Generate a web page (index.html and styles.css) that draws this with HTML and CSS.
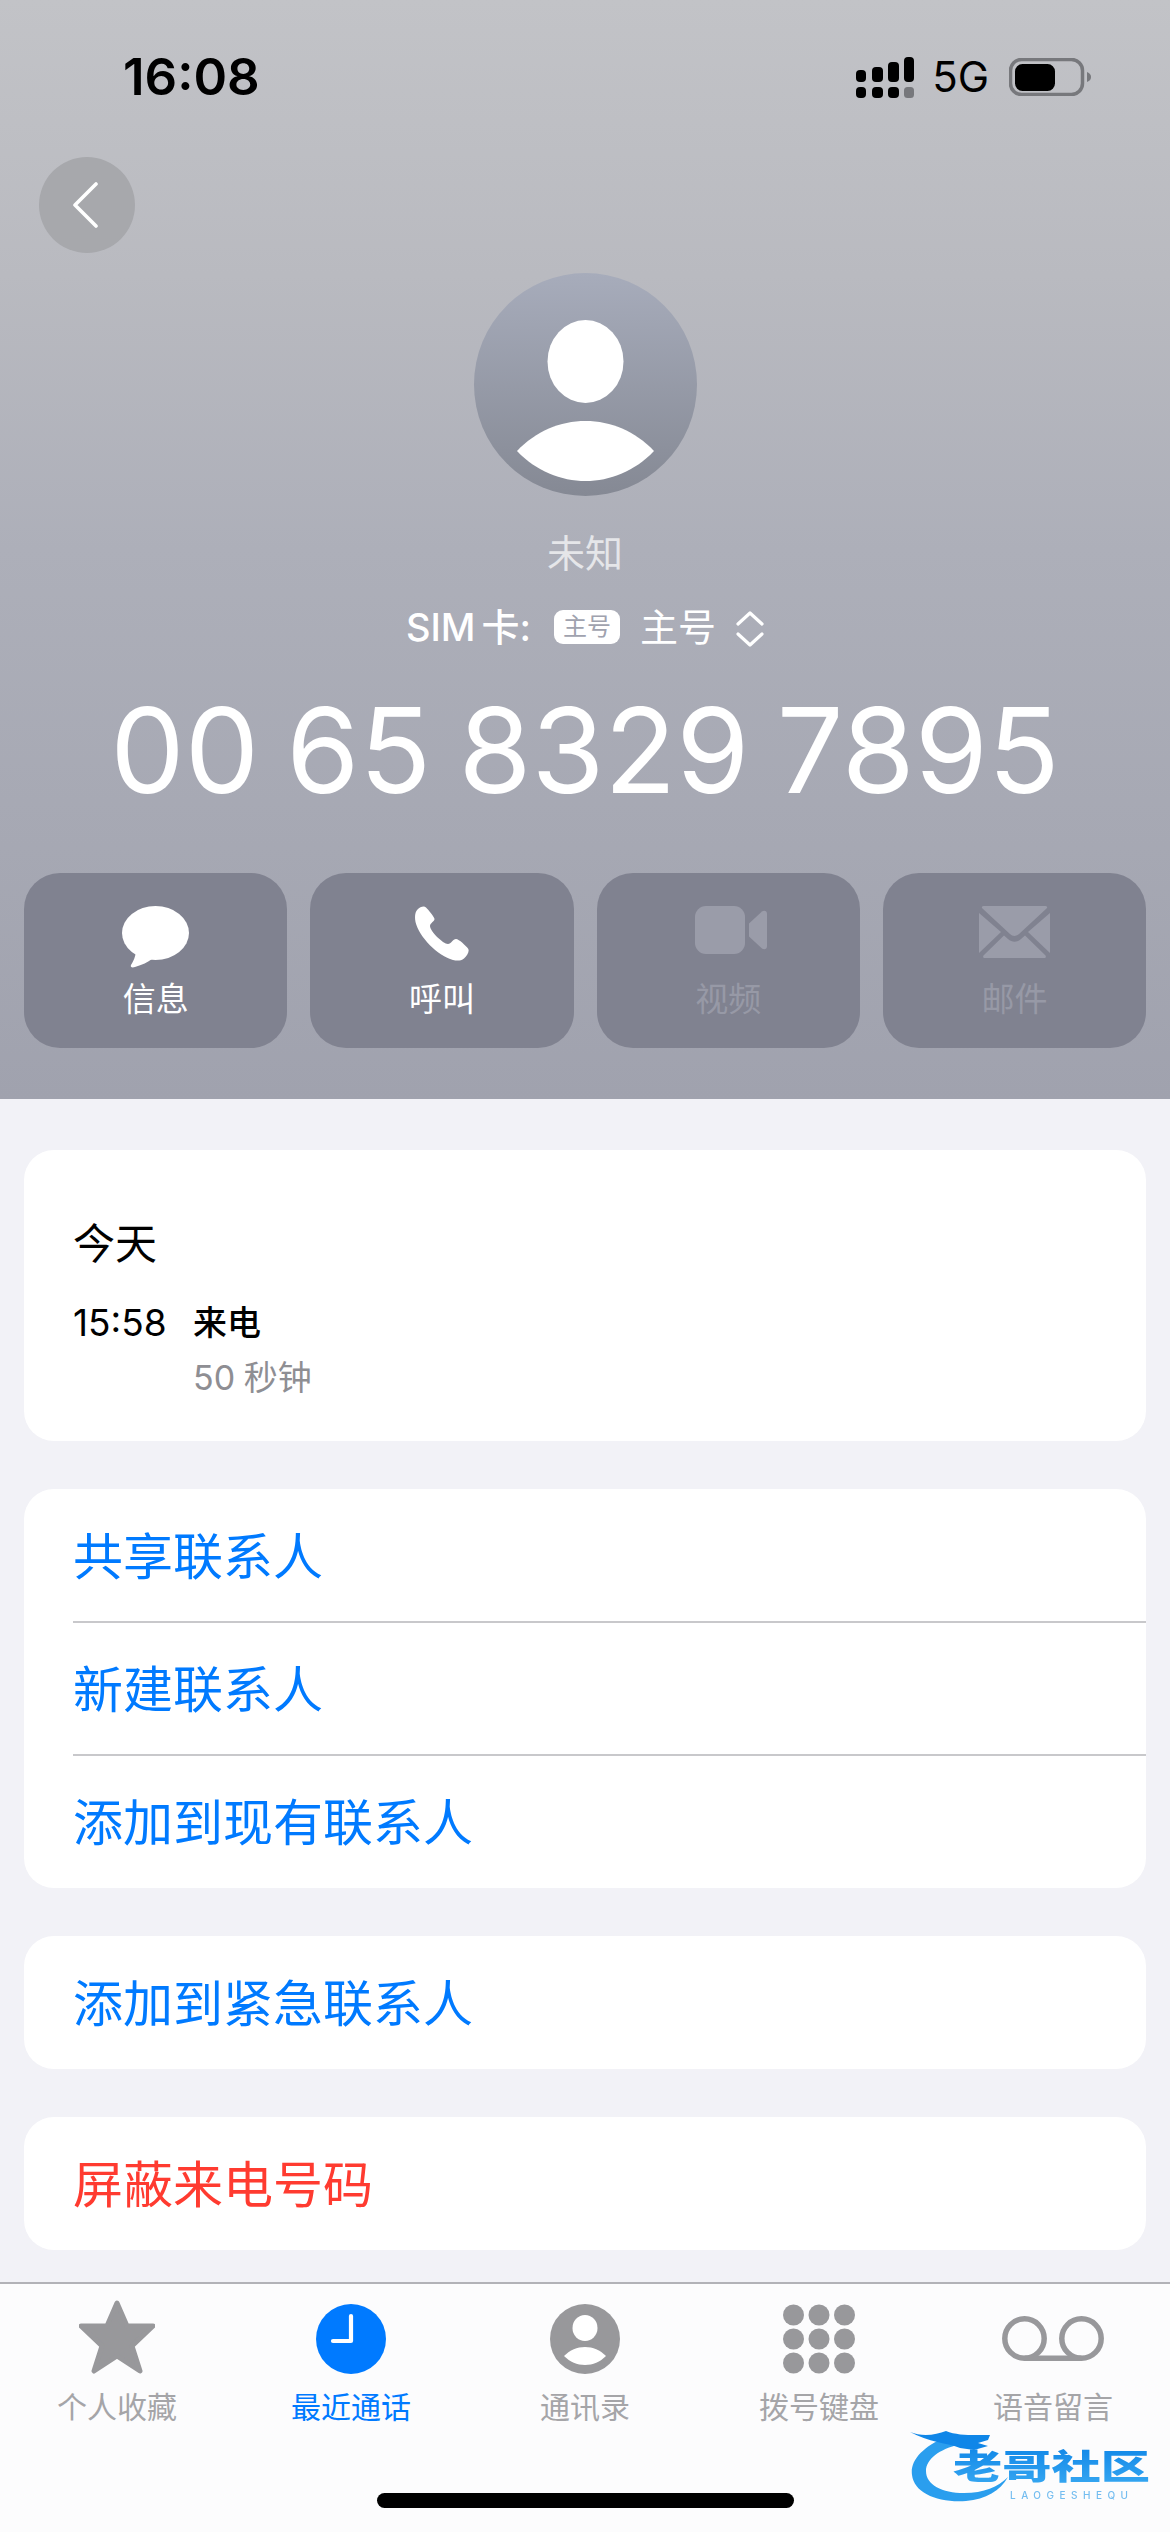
FILE: index.html
```html
<!DOCTYPE html>
<html lang="zh-CN">
<head>
<meta charset="utf-8">
<title>未知</title>
<link rel="stylesheet" href="styles.css">
</head>
<body>
<div class="screen">
  <header class="hero">
    <div class="status">
      <span class="time">16:08</span>
      <div class="status-right">
        <svg class="signal" width="58" height="41" viewBox="0 0 58 41">
          <rect x="0" y="13" width="10" height="12" rx="4"/><rect x="16" y="10" width="11" height="15" rx="4"/><rect x="32" y="5" width="11" height="20" rx="4"/><rect x="48" y="0" width="10" height="25" rx="4"/>
          <rect x="0" y="30" width="10" height="11" rx="4"/><rect x="16" y="30" width="11" height="11" rx="4"/><rect x="32" y="30" width="11" height="11" rx="4"/><rect x="48" y="30" width="10" height="11" rx="3.5" fill="#77787c"/>
        </svg>
        <span class="net">5G</span>
        <svg class="battery" width="82" height="38" viewBox="0 0 82 38">
          <rect x="1.5" y="1.5" width="72" height="35" rx="11" fill="none" stroke="#77787c" stroke-width="3.5"/>
          <rect x="6" y="6" width="40" height="27" rx="7.5" fill="#000"/>
          <path d="M78 14c3 1 4 3 4 5s-1 4-4 5z" fill="#77787c"/>
        </svg>
      </div>
    </div>
    <button class="back" type="button" aria-label="返回">
      <svg width="26" height="46" viewBox="0 0 26 46"><path d="M24 2 3 23l21 21" fill="none" stroke="#fff" stroke-width="3.6" stroke-linecap="round" stroke-linejoin="round"/></svg>
    </button>
    <div class="avatar">
      <svg width="223" height="223" viewBox="0 0 223 223">
        <ellipse cx="111.5" cy="88.5" rx="38" ry="41.5" fill="#fff"/>
        <path d="M43 178C62 158 86 148 111.500 148S161 158 180 178C161 198 136 208 111.500 208S62 198 43 178Z" fill="#fff"/>
      </svg>
    </div>
    <div class="name">未知</div>
    <div class="sim">
      <span class="sim-label">SIM 卡:</span>
      <span class="sim-badge">主号</span>
      <span class="sim-name">主号</span>
      <svg class="sim-arrows" width="28" height="38" viewBox="0 0 28 38"><path d="M2 14 14 3l12 11M2 24l12 11 12-11" fill="none" stroke="#fff" stroke-width="3.2" stroke-linecap="round" stroke-linejoin="round"/></svg>
    </div>
    <div class="number">00 65 8329 7895</div>
    <div class="actions">
      <div class="action">
        <div class="action-icon icon-message">
          <svg width="70" height="62" viewBox="0 0 70 62" fill="#fff"><ellipse cx="33.500" cy="27" rx="33.500" ry="27"/><path d="M14 44C14 50 11 56 9 59 8 61 10 62 13 61 20 59 26 56 30 53Z"/></svg>
        </div>
        <span class="action-label">信息</span>
      </div>
      <div class="action">
        <div class="action-icon">
          <svg width="56" height="56" viewBox="0 0 56 56" fill="#fff"><path d="M3.500 3.500C6 1 10-.5 12 1.500 14 3.500 20.500 11 20.500 13 20.500 15.500 16 17 16 20 16 25 29 38 34 38 37 38 39 33 42 33 45 33 52 40 54 42.500 56 45 53 50 50 52.500 47 55 43 55 39 54 24 50 5 31 1.500 16 .5 11 1 6 3.500 3.500Z"/></svg>
        </div>
        <span class="action-label">呼叫</span>
      </div>
      <div class="action is-off">
        <div class="action-icon icon-video">
          <svg width="72" height="48" viewBox="0 0 72 48" fill="#9a9ca9"><rect width="50" height="48" rx="11"/><path d="M54 17.500 67 5.500C69 4 72 4.500 72 8V40C72 43.500 69 44 67 42.500L54 30.500Z"/></svg>
        </div>
        <span class="action-label">视频</span>
      </div>
      <div class="action is-off">
        <div class="action-icon">
          <svg width="71" height="52" viewBox="0 0 71 52" fill="#9a9ca9"><path d="M6 0H65C68 0 69 1 67.500 2.500L40 28C37.500 30.500 33.500 30.500 31 28L3.500 2.500C2 1 3 0 6 0Z"/><path d="M0 7 22 26 0 47Z"/><path d="M71 7 49 26 71 47Z"/><path d="M6 52C4 52 3.500 50.500 5 49L25 29.500 29 33C33 36.500 38 36.500 42 33L46 29.500 66 49C67.500 50.500 67 52 65 52Z"/></svg>
        </div>
        <span class="action-label">邮件</span>
      </div>
    </div>
  </header>

  <main class="content">
    <section class="card log">
      <div class="log-day">今天</div>
      <div class="log-row">
        <span class="log-time">15:58</span>
        <div class="log-detail">
          <div class="log-type">来电</div>
          <div class="log-length">50 秒钟</div>
        </div>
      </div>
    </section>
    <section class="card">
      <div class="row">共享联系人</div>
      <div class="row row-line">新建联系人</div>
      <div class="row row-line">添加到现有联系人</div>
    </section>
    <section class="card">
      <div class="row">添加到紧急联系人</div>
    </section>
    <section class="card">
      <div class="row row-danger">屏蔽来电号码</div>
    </section>
  </main>

  <nav class="tabbar">
    <div class="tabs">
      <div class="tab">
        <svg width="76" height="74" viewBox="0 0 76 74"><path d="M38 3 48 26H74L53 46 61 71 38 56 15 71 23 46 2 26H28Z" fill="#98989b" stroke="#98989b" stroke-width="5" stroke-linejoin="round"/></svg>
        <span class="tab-label">个人收藏</span>
      </div>
      <div class="tab is-active">
        <svg width="70" height="74" viewBox="0 0 70 74"><circle cx="35" cy="39" r="35" fill="#007aff"/><path d="M35 16V41H17" fill="none" stroke="#fff" stroke-width="4.200" stroke-linecap="round" stroke-linejoin="round"/></svg>
        <span class="tab-label">最近通话</span>
      </div>
      <div class="tab">
        <svg width="70" height="74" viewBox="0 0 70 74"><circle cx="35" cy="39" r="35" fill="#98989b"/><ellipse cx="35" cy="28" rx="12.500" ry="13" fill="#fff"/><path d="M14 56C20 50 27 47 35 47S50 50 56 56C50 62 43 65 35 65S20 62 14 56Z" fill="#fff"/></svg>
        <span class="tab-label">通讯录</span>
      </div>
      <div class="tab">
        <svg width="72" height="74" viewBox="0 0 72 74" fill="#98989b">
          <circle cx="10.500" cy="15" r="10.500"/><circle cx="36" cy="15" r="10.500"/><circle cx="61.500" cy="15" r="10.500"/>
          <circle cx="10.500" cy="39" r="10.500"/><circle cx="36" cy="39" r="10.500"/><circle cx="61.500" cy="39" r="10.500"/>
          <circle cx="10.500" cy="63" r="10.500"/><circle cx="36" cy="63" r="10.500"/><circle cx="61.500" cy="63" r="10.500"/>
        </svg>
        <span class="tab-label">拨号键盘</span>
      </div>
      <div class="tab">
        <svg width="102" height="74" viewBox="0 0 102 74" fill="none" stroke="#98989b" stroke-width="5.500"><circle cx="22.500" cy="38.500" r="19.700"/><circle cx="79.500" cy="38.500" r="19.700"/><path d="M22.500 58.200H79.500"/></svg>
        <span class="tab-label">语音留言</span>
      </div>
    </div>
    <div class="home-bar"></div>
    <svg class="watermark" width="244" height="82" viewBox="0 0 244 82">
      <defs>
        <linearGradient id="wm" x1="0" y1="0" x2="0" y2="1"><stop offset="0" stop-color="#0b82e6"/><stop offset="1" stop-color="#3aaaf2"/></linearGradient>
      </defs>
      <path d="M38 12C14 22 2 36 4 50 6 68 30 78 58 76 78 74 92 66 100 52 90 62 76 68 56 68 34 68 18 60 18 46 18 34 32 24 50 20Z" fill="#2a9eee"/>
      <path d="M2 7C14 12 28 10 38 6 50 11 66 10 82 10L80 15 70 18 80 21 66 25 52 23C40 18 20 17 2 7Z" fill="#0f86e8"/>
      <text class="wm-title" x="45" y="54" textLength="197" lengthAdjust="spacingAndGlyphs" fill="url(#wm)">老哥社区</text>
      <text class="wm-sub" x="102" y="74" textLength="118" fill="#74bdf0">LAOGESHEQU</text>
    </svg>
  </nav>
</div>
</body>
</html>
```
FILE: styles.css
```css
* { box-sizing: border-box; }
html, body { margin: 0; padding: 0; }
body {
  width: 1170px;
  height: 2532px;
  overflow: hidden;
  background: #f2f2f7;
  font-family: Inter, "Noto Sans CJK SC", sans-serif;
}
.screen { display: flex; flex-direction: column; height: 2532px; }

.hero {
  height: 1099px;
  padding-top: 57px;
  display: flex;
  flex-direction: column;
  background: linear-gradient(180deg, #c2c3c7 0%, #b9bac0 25%, #adafb9 50%, #a0a2ae 100%);
}
.status {
  height: 40px;
  padding: 0 79px 0 123px;
  display: flex;
  align-items: center;
  justify-content: space-between;
}
.time { font-size: 51px; line-height: 40px; font-weight: 600; color: #000; }
.status-right { display: flex; align-items: center; }
.signal { display: block; margin-top: 1px; }
.net { margin-left: 18px; font-size: 42px; line-height: 40px; color: #000; }
.battery { display: block; margin-left: 20px; }

.back {
  width: 96px;
  height: 96px;
  margin: 60px 0 0 39px;
  padding: 0 4px 0 0;
  border: 0;
  border-radius: 50%;
  background: #a7a8ac;
  display: flex;
  align-items: center;
  justify-content: center;
}
.back svg { display: block; }

.avatar {
  width: 223px;
  height: 223px;
  margin: 20px auto 0;
  border-radius: 50%;
  background: linear-gradient(180deg, #a7acbb 0%, #858994 100%);
}
.avatar svg { display: block; }
.name {
  margin-top: 32px;
  text-align: center;
  font-size: 38px;
  line-height: 50px;
  color: #e5e6e9;
}
.sim {
  height: 44px;
  margin-top: 27px;
  display: flex;
  align-items: center;
  justify-content: center;
  font-size: 38px;
  line-height: 44px;
  color: #fff;
}
.sim-label { font-weight: 500; word-spacing: -4px; }
.sim-badge {
  margin-left: 23px;
  width: 66px;
  height: 34px;
  border-radius: 9px;
  background: #fff;
  color: #a0a2ae;
  font-size: 24px;
  line-height: 34px;
  text-align: center;
}
.sim-name { margin-left: 20px; }
.sim-arrows { display: block; margin: 3px 0 0 20px; }
.number {
  margin-top: 41px;
  text-align: center;
  font-size: 118px;
  line-height: 120px;
  word-spacing: -6px;
  color: #fff;
  white-space: nowrap;
}
.actions {
  height: 175px;
  margin-top: 63px;
  padding: 0 24px;
  display: grid;
  grid-template-columns: repeat(4, 1fr);
  column-gap: 23px;
}
.action {
  border-radius: 36px;
  background: #808290;
  display: flex;
  flex-direction: column;
  align-items: center;
  color: #fff;
}
.action.is-off { color: #9799a6; }
.action-icon {
  height: 106px;
  padding-top: 33px;
  display: flex;
  justify-content: center;
}
.action-icon svg { display: block; }
.icon-message { padding-left: 3px; }
.icon-video { padding-left: 5px; }
.action-label { font-size: 33px; line-height: 40px; }

.content {
  flex: 1;
  padding: 51px 24px 0;
  display: flex;
  flex-direction: column;
  gap: 48px;
}
.card { background: #fff; border-radius: 30px; overflow: hidden; }
.log { height: 291px; padding: 64px 49px 0; }
.log-day { font-size: 42px; line-height: 60px; color: #000; }
.log-row { margin-top: 25px; display: grid; grid-template-columns: 120px 1fr; }
.log-time { font-size: 37px; line-height: 48px; color: #000; }
.log-type { font-size: 34px; line-height: 48px; font-weight: 500; color: #000; }
.log-length { margin-top: 7px; font-size: 34px; line-height: 48px; word-spacing: -1px; color: #8e8e93; }
.row {
  height: 133px;
  padding-left: 49px;
  font-size: 50px;
  line-height: 136px;
  color: #007aff;
  white-space: nowrap;
}
.row-line { position: relative; height: 133px; }
.row-line::before {
  content: "";
  position: absolute;
  top: -1px;
  left: 49px;
  right: 0;
  height: 2px;
  background: #c8c8cb;
}
.row-danger { color: #ff3b30; }

.tabbar {
  position: relative;
  height: 250px;
  border-top: 2px solid #b2b2b7;
  background: #fcfcfd;
}
.tabs { display: grid; grid-template-columns: repeat(5, 1fr); padding-top: 16px; }
.tab { display: flex; flex-direction: column; align-items: center; color: #a5a5a8; }
.tab svg { display: block; }
.tab.is-active { color: #007aff; }
.tab-label { margin-top: 13px; font-size: 30px; line-height: 40px; }
.home-bar { width: 417px; height: 15px; margin: 66px auto 0; border-radius: 8px; background: #000; }
.watermark { position: absolute; left: 908px; top: 141px; filter: blur(.7px); }
.wm-title { font-family: "Noto Sans CJK SC", sans-serif; font-size: 34px; font-weight: 900; }
.wm-sub { font-family: Inter, sans-serif; font-size: 10px; font-weight: 500; }
```
